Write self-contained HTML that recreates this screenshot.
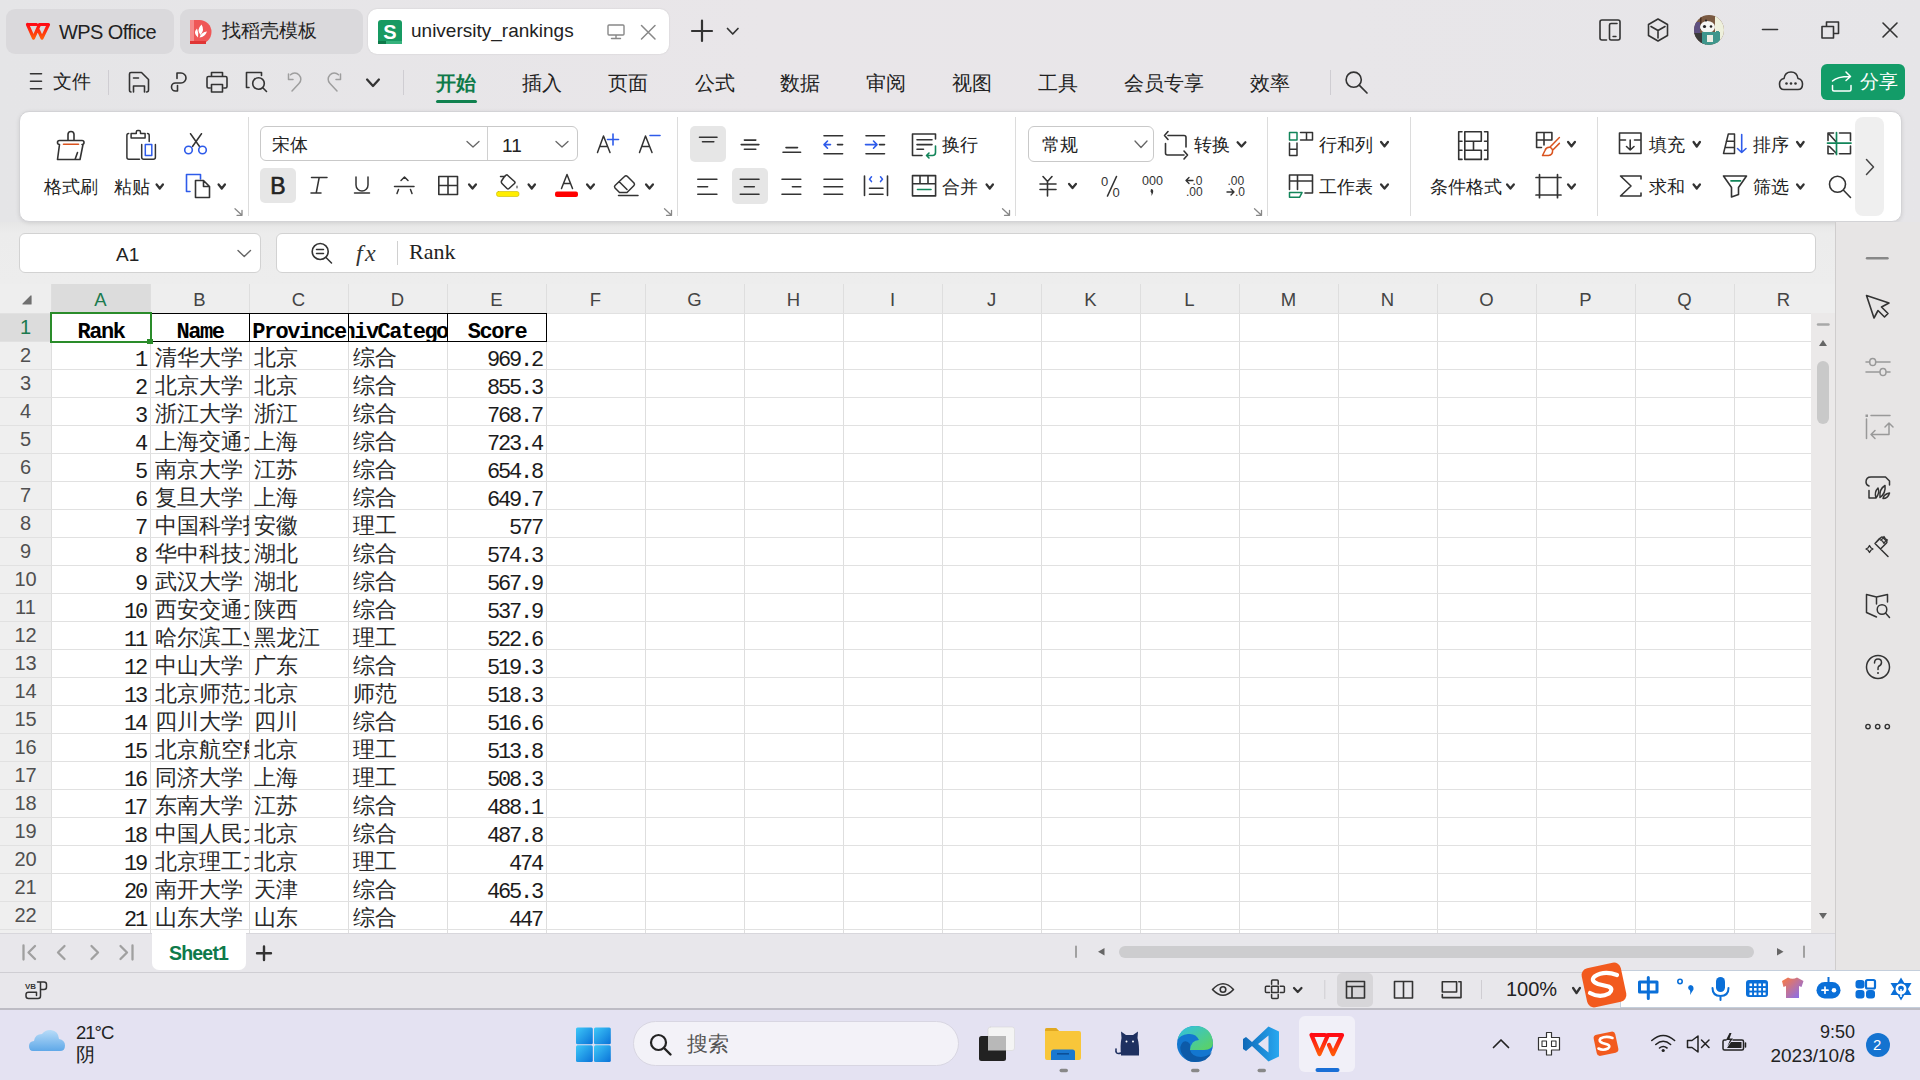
<!DOCTYPE html><html><head><meta charset="utf-8"><style>
*{margin:0;padding:0;box-sizing:border-box}
html,body{width:1920px;height:1080px;overflow:hidden;background:#e8e6ea;font-family:"Liberation Sans",sans-serif;color:#222}
div{position:absolute}
.t{white-space:nowrap;line-height:1}
.sep{background:#cfcdd2;width:1px}
.cell{overflow:hidden;white-space:nowrap;font-family:"Liberation Mono",monospace;font-size:22px;letter-spacing:-2.2px;line-height:38px;color:#1c1c1c}
</style></head><body><div style="left:0px;top:0px;width:1920px;height:222px;background:linear-gradient(90deg,#e5e5e7,#e9e6e9 40%,#e8e6e9 70%,#e6e5e8)"></div>
<div style="left:6px;top:9px;width:168px;height:45px;background:#dad9dc;border-radius:9px"></div>
<div style="left:180px;top:9px;width:183px;height:45px;background:#dad9dc;border-radius:9px"></div>
<div style="left:368px;top:9px;width:301px;height:45px;background:#fff;border-radius:9px;box-shadow:0 0 2px rgba(0,0,0,.12)"></div>
<div class="t" style="left:59px;top:22px;font-size:20px;color:#222;letter-spacing:-0.6px">WPS Office</div>
<div class="t" style="left:222px;top:22px;font-size:18.5px;color:#222">找稻壳模板</div>
<div class="t" style="left:411px;top:21px;font-size:19px;color:#222">university_rankings</div>
<div class="t" style="left:53px;top:72px;font-size:19px">文件</div>
<div class="t" style="left:436px;top:73px;font-size:20px;color:#0f7a4a;font-weight:bold">开始</div>
<div class="t" style="left:522px;top:73px;font-size:20px;color:#222">插入</div>
<div class="t" style="left:608px;top:73px;font-size:20px;color:#222">页面</div>
<div class="t" style="left:695px;top:73px;font-size:20px;color:#222">公式</div>
<div class="t" style="left:780px;top:73px;font-size:20px;color:#222">数据</div>
<div class="t" style="left:866px;top:73px;font-size:20px;color:#222">审阅</div>
<div class="t" style="left:952px;top:73px;font-size:20px;color:#222">视图</div>
<div class="t" style="left:1038px;top:73px;font-size:20px;color:#222">工具</div>
<div class="t" style="left:1124px;top:73px;font-size:20px;color:#222">会员专享</div>
<div class="t" style="left:1250px;top:73px;font-size:20px;color:#222">效率</div>
<div style="left:436px;top:100px;width:41px;height:3px;background:#10814f;border-radius:2px"></div>
<div class="sep" style="left:108px;top:70px;width:1px;height:25px;"></div>
<div class="sep" style="left:403px;top:70px;width:1px;height:25px;"></div>
<div class="sep" style="left:1330px;top:70px;width:1px;height:25px;"></div>
<div style="left:1821px;top:64px;width:84px;height:36px;background:#139c68;border-radius:6px"></div>
<div class="t" style="left:1860px;top:73px;font-size:18.5px;color:#fff">分享</div>
<div style="left:0px;top:222px;width:1835px;height:62px;background:linear-gradient(#e6e6e6,#ececec 12px,#ededed)"></div>
<div style="left:18.5px;top:110.5px;width:1883px;height:111px;background:#fff;border-radius:10px;border:1px solid #d3d3d6;box-shadow:0 1px 4px rgba(0,0,0,.10)"></div>
<div class="t" style="left:44px;top:178px;font-size:18px">格式刷</div>
<div class="t" style="left:114px;top:178px;font-size:18px">粘贴</div>
<div style="left:260px;top:126px;width:318px;height:35px;background:#fff;border:1px solid #c9c9c9;border-radius:6px"></div>
<div style="left:487px;top:127px;width:1px;height:33px;background:#d0d0d0"></div>
<div class="t" style="left:272px;top:136px;font-size:18px">宋体</div>
<div class="t" style="left:502px;top:136px;font-size:19px">11</div>
<div style="left:260px;top:168px;width:36px;height:35px;background:#e6e6e6;border-radius:5px"></div>
<div style="left:690px;top:126px;width:36px;height:36px;background:#e6e6e6;border-radius:5px"></div>
<div style="left:732px;top:168px;width:36px;height:36px;background:#e6e6e6;border-radius:5px"></div>
<div class="t" style="left:942px;top:136px;font-size:18px">换行</div>
<div class="t" style="left:942px;top:178px;font-size:18px">合并</div>
<div style="left:1028px;top:126px;width:126px;height:36px;background:#fff;border:1px solid #c9c9c9;border-radius:6px"></div>
<div class="t" style="left:1042px;top:136px;font-size:18px">常规</div>
<div class="t" style="left:1194px;top:136px;font-size:18px">转换</div>
<div class="t" style="left:1319px;top:136px;font-size:18px">行和列</div>
<div class="t" style="left:1319px;top:178px;font-size:18px">工作表</div>
<div class="t" style="left:1430px;top:178px;font-size:18px">条件格式</div>
<div class="t" style="left:1649px;top:136px;font-size:18px">填充</div>
<div class="t" style="left:1649px;top:178px;font-size:18px">求和</div>
<div class="t" style="left:1753px;top:136px;font-size:18px">排序</div>
<div class="t" style="left:1753px;top:178px;font-size:18px">筛选</div>
<div style="left:1855px;top:117px;width:29px;height:99px;background:#efefef;border-radius:8px"></div>
<div style="left:248px;top:117px;width:1px;height:99px;background:#dcdcdc"></div>
<div style="left:677px;top:117px;width:1px;height:99px;background:#dcdcdc"></div>
<div style="left:1015px;top:117px;width:1px;height:99px;background:#dcdcdc"></div>
<div style="left:1267px;top:117px;width:1px;height:99px;background:#dcdcdc"></div>
<div style="left:1410px;top:117px;width:1px;height:99px;background:#dcdcdc"></div>
<div style="left:1597px;top:117px;width:1px;height:99px;background:#dcdcdc"></div>
<div style="left:19px;top:233px;width:242px;height:40px;background:#fff;border-radius:6px;border:1px solid #d2d2d2"></div>
<div class="t" style="left:116px;top:245px;font-size:19px;color:#222">A1</div>
<div style="left:276px;top:233px;width:1540px;height:40px;background:#fff;border-radius:6px;border:1px solid #d2d2d2"></div>
<div class="t" style="left:409px;top:241px;font-family:Liberation Serif;font-size:22px;color:#222">Rank</div>
<div style="left:397px;top:241px;width:1px;height:24px;background:#d0d0d0"></div>
<div style="left:0px;top:284px;width:1835px;height:29px;background:#eeeeee"></div>
<div style="left:0px;top:313px;width:51px;height:620px;background:#efefef"></div>
<div style="left:51px;top:313px;width:1760px;height:620px;background:#fff"></div>
<div style="left:52px;top:284px;width:98px;height:29px;background:#dcdcdc"></div>
<div style="left:0px;top:314px;width:51px;height:27px;background:#dcdcdc"></div>
<div class="t" style="left:51px;top:290.5px;width:99px;text-align:center;font-size:18.5px;color:#1b7a4e">A</div>
<div class="t" style="left:150px;top:290.5px;width:99px;text-align:center;font-size:18.5px;color:#444">B</div>
<div class="t" style="left:249px;top:290.5px;width:99px;text-align:center;font-size:18.5px;color:#444">C</div>
<div class="t" style="left:348px;top:290.5px;width:99px;text-align:center;font-size:18.5px;color:#444">D</div>
<div class="t" style="left:447px;top:290.5px;width:99px;text-align:center;font-size:18.5px;color:#444">E</div>
<div class="t" style="left:546px;top:290.5px;width:99px;text-align:center;font-size:18.5px;color:#444">F</div>
<div class="t" style="left:645px;top:290.5px;width:99px;text-align:center;font-size:18.5px;color:#444">G</div>
<div class="t" style="left:744px;top:290.5px;width:99px;text-align:center;font-size:18.5px;color:#444">H</div>
<div class="t" style="left:843px;top:290.5px;width:99px;text-align:center;font-size:18.5px;color:#444">I</div>
<div class="t" style="left:942px;top:290.5px;width:99px;text-align:center;font-size:18.5px;color:#444">J</div>
<div class="t" style="left:1041px;top:290.5px;width:99px;text-align:center;font-size:18.5px;color:#444">K</div>
<div class="t" style="left:1140px;top:290.5px;width:99px;text-align:center;font-size:18.5px;color:#444">L</div>
<div class="t" style="left:1239px;top:290.5px;width:99px;text-align:center;font-size:18.5px;color:#444">M</div>
<div class="t" style="left:1338px;top:290.5px;width:99px;text-align:center;font-size:18.5px;color:#444">N</div>
<div class="t" style="left:1437px;top:290.5px;width:99px;text-align:center;font-size:18.5px;color:#444">O</div>
<div class="t" style="left:1536px;top:290.5px;width:99px;text-align:center;font-size:18.5px;color:#444">P</div>
<div class="t" style="left:1635px;top:290.5px;width:99px;text-align:center;font-size:18.5px;color:#444">Q</div>
<div class="t" style="left:1734px;top:290.5px;width:99px;text-align:center;font-size:18.5px;color:#444">R</div>
<div style="left:51px;top:284px;width:1px;height:649px;background:#dedede"></div>
<div style="left:150px;top:284px;width:1px;height:649px;background:#dedede"></div>
<div style="left:249px;top:284px;width:1px;height:649px;background:#dedede"></div>
<div style="left:348px;top:284px;width:1px;height:649px;background:#dedede"></div>
<div style="left:447px;top:284px;width:1px;height:649px;background:#dedede"></div>
<div style="left:546px;top:284px;width:1px;height:649px;background:#dedede"></div>
<div style="left:645px;top:284px;width:1px;height:649px;background:#dedede"></div>
<div style="left:744px;top:284px;width:1px;height:649px;background:#dedede"></div>
<div style="left:843px;top:284px;width:1px;height:649px;background:#dedede"></div>
<div style="left:942px;top:284px;width:1px;height:649px;background:#dedede"></div>
<div style="left:1041px;top:284px;width:1px;height:649px;background:#dedede"></div>
<div style="left:1140px;top:284px;width:1px;height:649px;background:#dedede"></div>
<div style="left:1239px;top:284px;width:1px;height:649px;background:#dedede"></div>
<div style="left:1338px;top:284px;width:1px;height:649px;background:#dedede"></div>
<div style="left:1437px;top:284px;width:1px;height:649px;background:#dedede"></div>
<div style="left:1536px;top:284px;width:1px;height:649px;background:#dedede"></div>
<div style="left:1635px;top:284px;width:1px;height:649px;background:#dedede"></div>
<div style="left:1734px;top:284px;width:1px;height:649px;background:#dedede"></div>
<div style="left:0px;top:313px;width:1811px;height:1px;background:#e1e1e1"></div>
<div style="left:0px;top:341px;width:1811px;height:1px;background:#e1e1e1"></div>
<div style="left:0px;top:369px;width:1811px;height:1px;background:#e1e1e1"></div>
<div style="left:0px;top:397px;width:1811px;height:1px;background:#e1e1e1"></div>
<div style="left:0px;top:425px;width:1811px;height:1px;background:#e1e1e1"></div>
<div style="left:0px;top:453px;width:1811px;height:1px;background:#e1e1e1"></div>
<div style="left:0px;top:481px;width:1811px;height:1px;background:#e1e1e1"></div>
<div style="left:0px;top:509px;width:1811px;height:1px;background:#e1e1e1"></div>
<div style="left:0px;top:537px;width:1811px;height:1px;background:#e1e1e1"></div>
<div style="left:0px;top:565px;width:1811px;height:1px;background:#e1e1e1"></div>
<div style="left:0px;top:593px;width:1811px;height:1px;background:#e1e1e1"></div>
<div style="left:0px;top:621px;width:1811px;height:1px;background:#e1e1e1"></div>
<div style="left:0px;top:649px;width:1811px;height:1px;background:#e1e1e1"></div>
<div style="left:0px;top:677px;width:1811px;height:1px;background:#e1e1e1"></div>
<div style="left:0px;top:705px;width:1811px;height:1px;background:#e1e1e1"></div>
<div style="left:0px;top:733px;width:1811px;height:1px;background:#e1e1e1"></div>
<div style="left:0px;top:761px;width:1811px;height:1px;background:#e1e1e1"></div>
<div style="left:0px;top:789px;width:1811px;height:1px;background:#e1e1e1"></div>
<div style="left:0px;top:817px;width:1811px;height:1px;background:#e1e1e1"></div>
<div style="left:0px;top:845px;width:1811px;height:1px;background:#e1e1e1"></div>
<div style="left:0px;top:873px;width:1811px;height:1px;background:#e1e1e1"></div>
<div style="left:0px;top:901px;width:1811px;height:1px;background:#e1e1e1"></div>
<div style="left:0px;top:929px;width:1811px;height:1px;background:#e1e1e1"></div>
<div class="t" style="left:0px;top:317px;width:51px;text-align:center;font-size:20px;color:#1b7a4e">1</div>
<div class="t" style="left:0px;top:345px;width:51px;text-align:center;font-size:20px;color:#505050">2</div>
<div class="t" style="left:0px;top:373px;width:51px;text-align:center;font-size:20px;color:#505050">3</div>
<div class="t" style="left:0px;top:401px;width:51px;text-align:center;font-size:20px;color:#505050">4</div>
<div class="t" style="left:0px;top:429px;width:51px;text-align:center;font-size:20px;color:#505050">5</div>
<div class="t" style="left:0px;top:457px;width:51px;text-align:center;font-size:20px;color:#505050">6</div>
<div class="t" style="left:0px;top:485px;width:51px;text-align:center;font-size:20px;color:#505050">7</div>
<div class="t" style="left:0px;top:513px;width:51px;text-align:center;font-size:20px;color:#505050">8</div>
<div class="t" style="left:0px;top:541px;width:51px;text-align:center;font-size:20px;color:#505050">9</div>
<div class="t" style="left:0px;top:569px;width:51px;text-align:center;font-size:20px;color:#505050">10</div>
<div class="t" style="left:0px;top:597px;width:51px;text-align:center;font-size:20px;color:#505050">11</div>
<div class="t" style="left:0px;top:625px;width:51px;text-align:center;font-size:20px;color:#505050">12</div>
<div class="t" style="left:0px;top:653px;width:51px;text-align:center;font-size:20px;color:#505050">13</div>
<div class="t" style="left:0px;top:681px;width:51px;text-align:center;font-size:20px;color:#505050">14</div>
<div class="t" style="left:0px;top:709px;width:51px;text-align:center;font-size:20px;color:#505050">15</div>
<div class="t" style="left:0px;top:737px;width:51px;text-align:center;font-size:20px;color:#505050">16</div>
<div class="t" style="left:0px;top:765px;width:51px;text-align:center;font-size:20px;color:#505050">17</div>
<div class="t" style="left:0px;top:793px;width:51px;text-align:center;font-size:20px;color:#505050">18</div>
<div class="t" style="left:0px;top:821px;width:51px;text-align:center;font-size:20px;color:#505050">19</div>
<div class="t" style="left:0px;top:849px;width:51px;text-align:center;font-size:20px;color:#505050">20</div>
<div class="t" style="left:0px;top:877px;width:51px;text-align:center;font-size:20px;color:#505050">21</div>
<div class="t" style="left:0px;top:905px;width:51px;text-align:center;font-size:20px;color:#505050">22</div>
<div class="cell" style="left:52px;top:314px;width:98px;height:27px;font-weight:bold;letter-spacing:-1.5px;color:#000"><div style="left:50%;top:0;transform:translateX(calc(-50% + 0px))">Rank</div></div>
<div class="cell" style="left:151px;top:314px;width:98px;height:27px;font-weight:bold;letter-spacing:-1.5px;color:#000"><div style="left:50%;top:0;transform:translateX(calc(-50% + 0px))">Name</div></div>
<div class="cell" style="left:250px;top:314px;width:98px;height:27px;font-weight:bold;letter-spacing:-1.5px;color:#000"><div style="left:50%;top:0;transform:translateX(calc(-50% + 0px))">Province</div></div>
<div class="cell" style="left:349px;top:314px;width:98px;height:27px;font-weight:bold;letter-spacing:-1.5px;color:#000"><div style="left:50%;top:0;transform:translateX(calc(-50% + 3px))">UnivCategory</div></div>
<div class="cell" style="left:448px;top:314px;width:98px;height:27px;font-weight:bold;letter-spacing:-1.5px;color:#000"><div style="left:50%;top:0;transform:translateX(calc(-50% + 0px))">Score</div></div>
<div class="cell" style="left:52px;top:342px;width:98px;height:27px;text-align:right;padding:0 4px;">1</div>
<div class="cell" style="left:151px;top:342px;width:98px;height:27px;text-align:left;padding:0 4px;font-family:Liberation Serif;letter-spacing:0;font-size:22px;line-height:32px;color:#2a2a2a">清华大学</div>
<div class="cell" style="left:250px;top:342px;width:98px;height:27px;text-align:left;padding:0 4px;font-family:Liberation Serif;letter-spacing:0;font-size:22px;line-height:32px;color:#2a2a2a">北京</div>
<div class="cell" style="left:349px;top:342px;width:98px;height:27px;text-align:left;padding:0 4px;font-family:Liberation Serif;letter-spacing:0;font-size:22px;line-height:32px;color:#2a2a2a">综合</div>
<div class="cell" style="left:448px;top:342px;width:98px;height:27px;text-align:right;padding:0 4px;">969.2</div>
<div class="cell" style="left:52px;top:370px;width:98px;height:27px;text-align:right;padding:0 4px;">2</div>
<div class="cell" style="left:151px;top:370px;width:98px;height:27px;text-align:left;padding:0 4px;font-family:Liberation Serif;letter-spacing:0;font-size:22px;line-height:32px;color:#2a2a2a">北京大学</div>
<div class="cell" style="left:250px;top:370px;width:98px;height:27px;text-align:left;padding:0 4px;font-family:Liberation Serif;letter-spacing:0;font-size:22px;line-height:32px;color:#2a2a2a">北京</div>
<div class="cell" style="left:349px;top:370px;width:98px;height:27px;text-align:left;padding:0 4px;font-family:Liberation Serif;letter-spacing:0;font-size:22px;line-height:32px;color:#2a2a2a">综合</div>
<div class="cell" style="left:448px;top:370px;width:98px;height:27px;text-align:right;padding:0 4px;">855.3</div>
<div class="cell" style="left:52px;top:398px;width:98px;height:27px;text-align:right;padding:0 4px;">3</div>
<div class="cell" style="left:151px;top:398px;width:98px;height:27px;text-align:left;padding:0 4px;font-family:Liberation Serif;letter-spacing:0;font-size:22px;line-height:32px;color:#2a2a2a">浙江大学</div>
<div class="cell" style="left:250px;top:398px;width:98px;height:27px;text-align:left;padding:0 4px;font-family:Liberation Serif;letter-spacing:0;font-size:22px;line-height:32px;color:#2a2a2a">浙江</div>
<div class="cell" style="left:349px;top:398px;width:98px;height:27px;text-align:left;padding:0 4px;font-family:Liberation Serif;letter-spacing:0;font-size:22px;line-height:32px;color:#2a2a2a">综合</div>
<div class="cell" style="left:448px;top:398px;width:98px;height:27px;text-align:right;padding:0 4px;">768.7</div>
<div class="cell" style="left:52px;top:426px;width:98px;height:27px;text-align:right;padding:0 4px;">4</div>
<div class="cell" style="left:151px;top:426px;width:98px;height:27px;text-align:left;padding:0 4px;font-family:Liberation Serif;letter-spacing:0;font-size:22px;line-height:32px;color:#2a2a2a">上海交通大学</div>
<div class="cell" style="left:250px;top:426px;width:98px;height:27px;text-align:left;padding:0 4px;font-family:Liberation Serif;letter-spacing:0;font-size:22px;line-height:32px;color:#2a2a2a">上海</div>
<div class="cell" style="left:349px;top:426px;width:98px;height:27px;text-align:left;padding:0 4px;font-family:Liberation Serif;letter-spacing:0;font-size:22px;line-height:32px;color:#2a2a2a">综合</div>
<div class="cell" style="left:448px;top:426px;width:98px;height:27px;text-align:right;padding:0 4px;">723.4</div>
<div class="cell" style="left:52px;top:454px;width:98px;height:27px;text-align:right;padding:0 4px;">5</div>
<div class="cell" style="left:151px;top:454px;width:98px;height:27px;text-align:left;padding:0 4px;font-family:Liberation Serif;letter-spacing:0;font-size:22px;line-height:32px;color:#2a2a2a">南京大学</div>
<div class="cell" style="left:250px;top:454px;width:98px;height:27px;text-align:left;padding:0 4px;font-family:Liberation Serif;letter-spacing:0;font-size:22px;line-height:32px;color:#2a2a2a">江苏</div>
<div class="cell" style="left:349px;top:454px;width:98px;height:27px;text-align:left;padding:0 4px;font-family:Liberation Serif;letter-spacing:0;font-size:22px;line-height:32px;color:#2a2a2a">综合</div>
<div class="cell" style="left:448px;top:454px;width:98px;height:27px;text-align:right;padding:0 4px;">654.8</div>
<div class="cell" style="left:52px;top:482px;width:98px;height:27px;text-align:right;padding:0 4px;">6</div>
<div class="cell" style="left:151px;top:482px;width:98px;height:27px;text-align:left;padding:0 4px;font-family:Liberation Serif;letter-spacing:0;font-size:22px;line-height:32px;color:#2a2a2a">复旦大学</div>
<div class="cell" style="left:250px;top:482px;width:98px;height:27px;text-align:left;padding:0 4px;font-family:Liberation Serif;letter-spacing:0;font-size:22px;line-height:32px;color:#2a2a2a">上海</div>
<div class="cell" style="left:349px;top:482px;width:98px;height:27px;text-align:left;padding:0 4px;font-family:Liberation Serif;letter-spacing:0;font-size:22px;line-height:32px;color:#2a2a2a">综合</div>
<div class="cell" style="left:448px;top:482px;width:98px;height:27px;text-align:right;padding:0 4px;">649.7</div>
<div class="cell" style="left:52px;top:510px;width:98px;height:27px;text-align:right;padding:0 4px;">7</div>
<div class="cell" style="left:151px;top:510px;width:98px;height:27px;text-align:left;padding:0 4px;font-family:Liberation Serif;letter-spacing:0;font-size:22px;line-height:32px;color:#2a2a2a">中国科学技术大学</div>
<div class="cell" style="left:250px;top:510px;width:98px;height:27px;text-align:left;padding:0 4px;font-family:Liberation Serif;letter-spacing:0;font-size:22px;line-height:32px;color:#2a2a2a">安徽</div>
<div class="cell" style="left:349px;top:510px;width:98px;height:27px;text-align:left;padding:0 4px;font-family:Liberation Serif;letter-spacing:0;font-size:22px;line-height:32px;color:#2a2a2a">理工</div>
<div class="cell" style="left:448px;top:510px;width:98px;height:27px;text-align:right;padding:0 4px;">577</div>
<div class="cell" style="left:52px;top:538px;width:98px;height:27px;text-align:right;padding:0 4px;">8</div>
<div class="cell" style="left:151px;top:538px;width:98px;height:27px;text-align:left;padding:0 4px;font-family:Liberation Serif;letter-spacing:0;font-size:22px;line-height:32px;color:#2a2a2a">华中科技大学</div>
<div class="cell" style="left:250px;top:538px;width:98px;height:27px;text-align:left;padding:0 4px;font-family:Liberation Serif;letter-spacing:0;font-size:22px;line-height:32px;color:#2a2a2a">湖北</div>
<div class="cell" style="left:349px;top:538px;width:98px;height:27px;text-align:left;padding:0 4px;font-family:Liberation Serif;letter-spacing:0;font-size:22px;line-height:32px;color:#2a2a2a">综合</div>
<div class="cell" style="left:448px;top:538px;width:98px;height:27px;text-align:right;padding:0 4px;">574.3</div>
<div class="cell" style="left:52px;top:566px;width:98px;height:27px;text-align:right;padding:0 4px;">9</div>
<div class="cell" style="left:151px;top:566px;width:98px;height:27px;text-align:left;padding:0 4px;font-family:Liberation Serif;letter-spacing:0;font-size:22px;line-height:32px;color:#2a2a2a">武汉大学</div>
<div class="cell" style="left:250px;top:566px;width:98px;height:27px;text-align:left;padding:0 4px;font-family:Liberation Serif;letter-spacing:0;font-size:22px;line-height:32px;color:#2a2a2a">湖北</div>
<div class="cell" style="left:349px;top:566px;width:98px;height:27px;text-align:left;padding:0 4px;font-family:Liberation Serif;letter-spacing:0;font-size:22px;line-height:32px;color:#2a2a2a">综合</div>
<div class="cell" style="left:448px;top:566px;width:98px;height:27px;text-align:right;padding:0 4px;">567.9</div>
<div class="cell" style="left:52px;top:594px;width:98px;height:27px;text-align:right;padding:0 4px;">10</div>
<div class="cell" style="left:151px;top:594px;width:98px;height:27px;text-align:left;padding:0 4px;font-family:Liberation Serif;letter-spacing:0;font-size:22px;line-height:32px;color:#2a2a2a">西安交通大学</div>
<div class="cell" style="left:250px;top:594px;width:98px;height:27px;text-align:left;padding:0 4px;font-family:Liberation Serif;letter-spacing:0;font-size:22px;line-height:32px;color:#2a2a2a">陕西</div>
<div class="cell" style="left:349px;top:594px;width:98px;height:27px;text-align:left;padding:0 4px;font-family:Liberation Serif;letter-spacing:0;font-size:22px;line-height:32px;color:#2a2a2a">综合</div>
<div class="cell" style="left:448px;top:594px;width:98px;height:27px;text-align:right;padding:0 4px;">537.9</div>
<div class="cell" style="left:52px;top:622px;width:98px;height:27px;text-align:right;padding:0 4px;">11</div>
<div class="cell" style="left:151px;top:622px;width:98px;height:27px;text-align:left;padding:0 4px;font-family:Liberation Serif;letter-spacing:0;font-size:22px;line-height:32px;color:#2a2a2a">哈尔滨工业大学</div>
<div class="cell" style="left:250px;top:622px;width:98px;height:27px;text-align:left;padding:0 4px;font-family:Liberation Serif;letter-spacing:0;font-size:22px;line-height:32px;color:#2a2a2a">黑龙江</div>
<div class="cell" style="left:349px;top:622px;width:98px;height:27px;text-align:left;padding:0 4px;font-family:Liberation Serif;letter-spacing:0;font-size:22px;line-height:32px;color:#2a2a2a">理工</div>
<div class="cell" style="left:448px;top:622px;width:98px;height:27px;text-align:right;padding:0 4px;">522.6</div>
<div class="cell" style="left:52px;top:650px;width:98px;height:27px;text-align:right;padding:0 4px;">12</div>
<div class="cell" style="left:151px;top:650px;width:98px;height:27px;text-align:left;padding:0 4px;font-family:Liberation Serif;letter-spacing:0;font-size:22px;line-height:32px;color:#2a2a2a">中山大学</div>
<div class="cell" style="left:250px;top:650px;width:98px;height:27px;text-align:left;padding:0 4px;font-family:Liberation Serif;letter-spacing:0;font-size:22px;line-height:32px;color:#2a2a2a">广东</div>
<div class="cell" style="left:349px;top:650px;width:98px;height:27px;text-align:left;padding:0 4px;font-family:Liberation Serif;letter-spacing:0;font-size:22px;line-height:32px;color:#2a2a2a">综合</div>
<div class="cell" style="left:448px;top:650px;width:98px;height:27px;text-align:right;padding:0 4px;">519.3</div>
<div class="cell" style="left:52px;top:678px;width:98px;height:27px;text-align:right;padding:0 4px;">13</div>
<div class="cell" style="left:151px;top:678px;width:98px;height:27px;text-align:left;padding:0 4px;font-family:Liberation Serif;letter-spacing:0;font-size:22px;line-height:32px;color:#2a2a2a">北京师范大学</div>
<div class="cell" style="left:250px;top:678px;width:98px;height:27px;text-align:left;padding:0 4px;font-family:Liberation Serif;letter-spacing:0;font-size:22px;line-height:32px;color:#2a2a2a">北京</div>
<div class="cell" style="left:349px;top:678px;width:98px;height:27px;text-align:left;padding:0 4px;font-family:Liberation Serif;letter-spacing:0;font-size:22px;line-height:32px;color:#2a2a2a">师范</div>
<div class="cell" style="left:448px;top:678px;width:98px;height:27px;text-align:right;padding:0 4px;">518.3</div>
<div class="cell" style="left:52px;top:706px;width:98px;height:27px;text-align:right;padding:0 4px;">14</div>
<div class="cell" style="left:151px;top:706px;width:98px;height:27px;text-align:left;padding:0 4px;font-family:Liberation Serif;letter-spacing:0;font-size:22px;line-height:32px;color:#2a2a2a">四川大学</div>
<div class="cell" style="left:250px;top:706px;width:98px;height:27px;text-align:left;padding:0 4px;font-family:Liberation Serif;letter-spacing:0;font-size:22px;line-height:32px;color:#2a2a2a">四川</div>
<div class="cell" style="left:349px;top:706px;width:98px;height:27px;text-align:left;padding:0 4px;font-family:Liberation Serif;letter-spacing:0;font-size:22px;line-height:32px;color:#2a2a2a">综合</div>
<div class="cell" style="left:448px;top:706px;width:98px;height:27px;text-align:right;padding:0 4px;">516.6</div>
<div class="cell" style="left:52px;top:734px;width:98px;height:27px;text-align:right;padding:0 4px;">15</div>
<div class="cell" style="left:151px;top:734px;width:98px;height:27px;text-align:left;padding:0 4px;font-family:Liberation Serif;letter-spacing:0;font-size:22px;line-height:32px;color:#2a2a2a">北京航空航天大学</div>
<div class="cell" style="left:250px;top:734px;width:98px;height:27px;text-align:left;padding:0 4px;font-family:Liberation Serif;letter-spacing:0;font-size:22px;line-height:32px;color:#2a2a2a">北京</div>
<div class="cell" style="left:349px;top:734px;width:98px;height:27px;text-align:left;padding:0 4px;font-family:Liberation Serif;letter-spacing:0;font-size:22px;line-height:32px;color:#2a2a2a">理工</div>
<div class="cell" style="left:448px;top:734px;width:98px;height:27px;text-align:right;padding:0 4px;">513.8</div>
<div class="cell" style="left:52px;top:762px;width:98px;height:27px;text-align:right;padding:0 4px;">16</div>
<div class="cell" style="left:151px;top:762px;width:98px;height:27px;text-align:left;padding:0 4px;font-family:Liberation Serif;letter-spacing:0;font-size:22px;line-height:32px;color:#2a2a2a">同济大学</div>
<div class="cell" style="left:250px;top:762px;width:98px;height:27px;text-align:left;padding:0 4px;font-family:Liberation Serif;letter-spacing:0;font-size:22px;line-height:32px;color:#2a2a2a">上海</div>
<div class="cell" style="left:349px;top:762px;width:98px;height:27px;text-align:left;padding:0 4px;font-family:Liberation Serif;letter-spacing:0;font-size:22px;line-height:32px;color:#2a2a2a">理工</div>
<div class="cell" style="left:448px;top:762px;width:98px;height:27px;text-align:right;padding:0 4px;">508.3</div>
<div class="cell" style="left:52px;top:790px;width:98px;height:27px;text-align:right;padding:0 4px;">17</div>
<div class="cell" style="left:151px;top:790px;width:98px;height:27px;text-align:left;padding:0 4px;font-family:Liberation Serif;letter-spacing:0;font-size:22px;line-height:32px;color:#2a2a2a">东南大学</div>
<div class="cell" style="left:250px;top:790px;width:98px;height:27px;text-align:left;padding:0 4px;font-family:Liberation Serif;letter-spacing:0;font-size:22px;line-height:32px;color:#2a2a2a">江苏</div>
<div class="cell" style="left:349px;top:790px;width:98px;height:27px;text-align:left;padding:0 4px;font-family:Liberation Serif;letter-spacing:0;font-size:22px;line-height:32px;color:#2a2a2a">综合</div>
<div class="cell" style="left:448px;top:790px;width:98px;height:27px;text-align:right;padding:0 4px;">488.1</div>
<div class="cell" style="left:52px;top:818px;width:98px;height:27px;text-align:right;padding:0 4px;">18</div>
<div class="cell" style="left:151px;top:818px;width:98px;height:27px;text-align:left;padding:0 4px;font-family:Liberation Serif;letter-spacing:0;font-size:22px;line-height:32px;color:#2a2a2a">中国人民大学</div>
<div class="cell" style="left:250px;top:818px;width:98px;height:27px;text-align:left;padding:0 4px;font-family:Liberation Serif;letter-spacing:0;font-size:22px;line-height:32px;color:#2a2a2a">北京</div>
<div class="cell" style="left:349px;top:818px;width:98px;height:27px;text-align:left;padding:0 4px;font-family:Liberation Serif;letter-spacing:0;font-size:22px;line-height:32px;color:#2a2a2a">综合</div>
<div class="cell" style="left:448px;top:818px;width:98px;height:27px;text-align:right;padding:0 4px;">487.8</div>
<div class="cell" style="left:52px;top:846px;width:98px;height:27px;text-align:right;padding:0 4px;">19</div>
<div class="cell" style="left:151px;top:846px;width:98px;height:27px;text-align:left;padding:0 4px;font-family:Liberation Serif;letter-spacing:0;font-size:22px;line-height:32px;color:#2a2a2a">北京理工大学</div>
<div class="cell" style="left:250px;top:846px;width:98px;height:27px;text-align:left;padding:0 4px;font-family:Liberation Serif;letter-spacing:0;font-size:22px;line-height:32px;color:#2a2a2a">北京</div>
<div class="cell" style="left:349px;top:846px;width:98px;height:27px;text-align:left;padding:0 4px;font-family:Liberation Serif;letter-spacing:0;font-size:22px;line-height:32px;color:#2a2a2a">理工</div>
<div class="cell" style="left:448px;top:846px;width:98px;height:27px;text-align:right;padding:0 4px;">474</div>
<div class="cell" style="left:52px;top:874px;width:98px;height:27px;text-align:right;padding:0 4px;">20</div>
<div class="cell" style="left:151px;top:874px;width:98px;height:27px;text-align:left;padding:0 4px;font-family:Liberation Serif;letter-spacing:0;font-size:22px;line-height:32px;color:#2a2a2a">南开大学</div>
<div class="cell" style="left:250px;top:874px;width:98px;height:27px;text-align:left;padding:0 4px;font-family:Liberation Serif;letter-spacing:0;font-size:22px;line-height:32px;color:#2a2a2a">天津</div>
<div class="cell" style="left:349px;top:874px;width:98px;height:27px;text-align:left;padding:0 4px;font-family:Liberation Serif;letter-spacing:0;font-size:22px;line-height:32px;color:#2a2a2a">综合</div>
<div class="cell" style="left:448px;top:874px;width:98px;height:27px;text-align:right;padding:0 4px;">465.3</div>
<div class="cell" style="left:52px;top:902px;width:98px;height:27px;text-align:right;padding:0 4px;">21</div>
<div class="cell" style="left:151px;top:902px;width:98px;height:27px;text-align:left;padding:0 4px;font-family:Liberation Serif;letter-spacing:0;font-size:22px;line-height:32px;color:#2a2a2a">山东大学</div>
<div class="cell" style="left:250px;top:902px;width:98px;height:27px;text-align:left;padding:0 4px;font-family:Liberation Serif;letter-spacing:0;font-size:22px;line-height:32px;color:#2a2a2a">山东</div>
<div class="cell" style="left:349px;top:902px;width:98px;height:27px;text-align:left;padding:0 4px;font-family:Liberation Serif;letter-spacing:0;font-size:22px;line-height:32px;color:#2a2a2a">综合</div>
<div class="cell" style="left:448px;top:902px;width:98px;height:27px;text-align:right;padding:0 4px;">447</div>
<div style="left:150px;top:313px;width:397px;height:1px;background:#000"></div>
<div style="left:51px;top:341px;width:496px;height:1px;background:#000"></div>
<div style="left:249px;top:313px;width:1px;height:29px;background:#000"></div>
<div style="left:348px;top:313px;width:1px;height:29px;background:#000"></div>
<div style="left:447px;top:313px;width:1px;height:29px;background:#000"></div>
<div style="left:546px;top:313px;width:1px;height:29px;background:#000"></div>
<div style="left:50px;top:312px;width:102px;height:31px;border:2.5px solid #2a8c2a"></div>
<div style="left:147px;top:339px;width:6px;height:5px;background:#2a8c2a"></div>
<div style="left:1811px;top:313px;width:24px;height:620px;background:#ebe9e9"></div>
<div style="left:1817px;top:361px;width:12px;height:63px;background:#c9c9c9;border-radius:6px"></div>
<div style="left:1835px;top:222px;width:85px;height:748px;background:#e7e5e5;border-left:1px solid #cfcdcd"></div>
<div style="left:0px;top:933px;width:1835px;height:39px;background:#e8e7eb"></div>
<div style="left:0px;top:933px;width:152px;height:1px;background:#d8d7dc"></div>
<div style="left:246px;top:933px;width:1589px;height:1px;background:#d8d7dc"></div>
<div style="left:152px;top:933px;width:94px;height:37px;background:#fff;border-radius:0 0 7px 7px"></div>
<div class="t" style="left:169px;top:944px;font-size:19.5px;font-weight:bold;color:#0e7a4a;letter-spacing:-0.8px">Sheet1</div>
<div style="left:1119px;top:946px;width:635px;height:12px;background:#cdcdcf;border-radius:6px"></div>
<div style="left:0px;top:972px;width:1920px;height:36px;background:#e8e7eb;border-top:1px solid #cfced3"></div>
<div style="left:1337px;top:973px;width:36px;height:34px;background:#d7d6d9;border-radius:5px"></div>
<div class="t" style="left:1506px;top:979px;font-size:20px;color:#222">100%</div>
<div style="left:1620px;top:970px;width:1299px;height:38px;background:#fff;border:1px solid #c5cfdc"></div>
<div style="left:0px;top:1008px;width:1920px;height:72px;background:#e4e2f2"></div>
<div style="left:0px;top:1008px;width:1920px;height:1.5px;background:#bdbcc4"></div>
<div style="left:633px;top:1021px;width:326px;height:45px;background:#f3f2f8;border-radius:23px;border:1px solid #d8d6e2"></div>
<div class="t" style="left:687px;top:1033px;font-size:21px;color:#555">搜索</div>
<div style="left:1299px;top:1016px;width:56px;height:56px;background:#f1f0f8;border-radius:6px"></div>
<div class="t" style="left:76px;top:1023.5px;font-size:18.5px;color:#222;letter-spacing:-1px">21°C</div>
<div class="t" style="left:76px;top:1045px;font-size:19px;color:#222">阴</div>
<div class="t" style="left:1755px;top:1023px;width:100px;text-align:right;font-size:18px;color:#222">9:50</div>
<div class="t" style="left:1705px;top:1046px;width:150px;text-align:right;font-size:19px;color:#222">2023/10/8</div>
<div style="left:1866px;top:1033px;width:24px;height:24px;background:#1473d0;border-radius:50%"></div>
<div class="t" style="left:1873px;top:1037px;font-size:15px;color:#fff">2</div>
<svg style="position:absolute;left:0;top:0;pointer-events:none" width="1920" height="1080" viewBox="0 0 1920 1080" stroke-linecap="round" stroke-linejoin="round"><defs><linearGradient id="wpsg" x1="0" y1="0" x2="0" y2="1"><stop offset="0" stop-color="#ff0a14"/><stop offset="1" stop-color="#ff5a0a"/></linearGradient><linearGradient id="shirt" x1="0" y1="0" x2="1" y2="1"><stop offset="0" stop-color="#ff7a3c"/><stop offset="1" stop-color="#7b6cff"/></linearGradient><linearGradient id="edge1" x1="0" y1="0" x2="1" y2="1"><stop offset="0" stop-color="#2fc0e8"/><stop offset="1" stop-color="#5fd35a"/></linearGradient></defs><path d="M27.5 24.5 H36.5 M27.5 24.5 L33.5 38 L39.5 24.5 H48.5 L42 38 L38.5 30.5" stroke="url(#wpsg)" stroke-width="3.2" fill="none" /><path d="M190 20 H199.5 A12 12 0 0 1 199.5 44 H190 Z" stroke="none" stroke-width="0" fill="#ef5757" /><rect x="190" y="20" width="4" height="24" fill="#f58b8b"/><rect x="190" y="41" width="16" height="3" fill="#e03535"/><path d="M201.5 24.5 Q196 30 200.5 35 Q205 30 201.5 24.5 Z M197 28.5 Q192.5 33 198 37.5 Q199 33 197 28.5 Z M207 31.5 Q201.5 32 199.5 37.5 Q205 37 207 31.5 Z" stroke="none" stroke-width="0" fill="#fff" /><rect x="378" y="20" width="24" height="24" rx="3" fill="#179a62"/><rect x="378" y="41" width="24" height="3" fill="#35b27c"/><rect x="378" y="41" width="8" height="3" fill="#0e7a4a"/><text x="390" y="39" font-family="Liberation Sans" font-weight="bold" font-size="20" fill="#fff" text-anchor="middle">S</text><path d="M609 25 H623 Q624 25 624 26 V34 Q624 35 623 35 H609 Q608 35 608 34 V26 Q608 25 609 25 Z M616 35 V38.5 M611.5 38.5 H620.5" stroke="#888" stroke-width="1.4" fill="none" /><path d="M641.5 25.5 L655 39 M655 25.5 L641.5 39" stroke="#888" stroke-width="1.5" fill="none" /><path d="M702 20.5 V41 M692 31 H712" stroke="#333" stroke-width="2.2" fill="none" /><path d="M727.5 28.5 L732.75 34 L738 28.5" stroke="#333" stroke-width="1.7" fill="none" /><path d="M1606.5 40 H1602 Q1600 40 1600 38 V22 Q1600 20 1602 20 H1618 Q1620 20 1620 22 V38 Q1620 40 1618 40 H1611 Q1609.5 40 1609.5 38.5 V25 Q1609.5 23.5 1611 23.5 H1617" stroke="#333" stroke-width="1.6" fill="none" /><path d="M1613 36.5 H1616" stroke="#333" stroke-width="1.4" fill="none" /><path d="M1658 19 L1667.5 24.5 V35.5 L1658 41 L1648.5 35.5 V24.5 Z M1651 26.5 L1658 30.5 L1665 26.5 M1658 30.5 V38" stroke="#333" stroke-width="1.6" fill="none" /><clipPath id="av"><circle cx="1709" cy="30" r="15"/></clipPath><g clip-path="url(#av)"><rect x="1694" y="15" width="30" height="30" fill="#7a5a42"/><rect x="1715" y="15" width="10" height="30" fill="#eef0dc"/><rect x="1694" y="22" width="6" height="12" fill="#5e5080"/><rect x="1700" y="16" width="1.5" height="14" fill="#4a3020"/><ellipse cx="1707.5" cy="27" rx="7.5" ry="6" fill="#f6f6f2"/><circle cx="1704.5" cy="26.5" r="1.6" fill="#222"/><circle cx="1711" cy="26.5" r="1.3" fill="#222"/><circle cx="1706" cy="20.5" r="1" fill="#222"/><rect x="1694" y="33" width="12" height="12" fill="#3a3a3a"/><rect x="1702" y="32" width="18" height="13" fill="#3f968c"/><rect x="1707" y="35" width="6" height="7" fill="#eeeee4"/><rect x="1716" y="31" width="3" height="12" fill="#3f968c"/></g><path d="M1762.5 29.5 H1777.5" stroke="#333" stroke-width="1.6" fill="none" /><path d="M1826.5 26 V22 H1838.5 V33.5 H1834 M1822 26.5 H1833.5 V38 H1822 Z" stroke="#333" stroke-width="1.6" fill="none" /><path d="M1883 23 L1897 37 M1897 23 L1883 37" stroke="#333" stroke-width="1.6" fill="none" /><path d="M30.5 73.7 H41.5 M30.5 81.2 H41.5 M30.5 88.7 H41.5" stroke="#333" stroke-width="1.6" fill="none" /><path d="M131 92 Q129.5 92 129.5 90 V74 Q129.5 72.5 131 72.5 H141.5 L148.5 79.5 V90 Q148.5 92 146.5 92 M133.5 92 V86 H144.5 V92 M133.5 78 H138.5" stroke="#333" stroke-width="1.6" fill="none" /><path d="M177 78.5 V73 H181 A5 5 0 0 1 181 83 H175.5 A4 4 0 0 0 175.5 91 H177.5 V85.5" stroke="#333" stroke-width="1.6" fill="none" /><path d="M211.5 76.5 V72.5 H222.5 V76.5 M210 88 H208.5 Q207 88 207 86.5 V78 Q207 76.5 208.5 76.5 H225.5 Q227 76.5 227 78 V86.5 Q227 88 225.5 88 H224 M211.5 84.5 H222.5 V92 H211.5 Z" stroke="#333" stroke-width="1.6" fill="none" /><path d="M249 87.5 H246.5 V72.5 H261.5 V75.5" stroke="#333" stroke-width="1.6" fill="none" /><circle cx="258.5" cy="83.5" r="5.8" stroke="#333" stroke-width="1.6" fill="none"/><path d="M262.8 87.8 L266.5 91.5" stroke="#333" stroke-width="1.6" fill="none" /><path d="M292 91 L299 83.5 A6 6 0 0 0 290.5 74.8 M288.5 74 V79.5 H293" stroke="#9e9e9e" stroke-width="1.5" fill="none" /><path d="M337 91 L330 83.5 A6 6 0 0 1 338.5 74.8 M340.5 74 V79.5 H336" stroke="#9e9e9e" stroke-width="1.5" fill="none" /><path d="M367.1 79.5 L373.0 86 L378.9 79.5" stroke="#333" stroke-width="2.3" fill="none" /><circle cx="1353.7" cy="79.7" r="7.6" stroke="#333" stroke-width="1.6" fill="none"/><path d="M1359.2 85.2 L1367 93" stroke="#333" stroke-width="1.7" fill="none" /><path d="M1784 89.5 Q1779.5 89.5 1779.5 84 Q1779.5 79.5 1784 78.5 Q1785 72 1791 72 Q1797 72 1798 78.5 Q1802.5 79.5 1802.5 84 Q1802.5 89.5 1798 89.5 Z" stroke="#333" stroke-width="1.6" fill="none" /><circle cx="1786.5" cy="83.5" r="1.3" fill="#333"/><circle cx="1791" cy="83.5" r="1.3" fill="#333"/><circle cx="1795.5" cy="83.5" r="1.3" fill="#333"/><path d="M1832.5 81 Q1837 76.5 1850 76.5 M1846 72 L1850.5 76.5 L1846 80.5 M1832.5 85.5 V89.5 Q1832.5 91 1834 91 H1849.5 Q1851 91 1851 89.5 V85.5" stroke="#fff" stroke-width="1.5" fill="none" /><path d="M68 140.5 V134.5 A3 3 0 0 1 74 134.5 V140.5 M59.5 144.5 Q57.5 144.5 57.5 142.5 Q57.5 140.5 59.5 140.5 H82 Q84 140.5 84 142.5 Q84 144.5 82 144.5 M59.5 144.5 L57.5 159.5 H80 L83 144.5 M77.5 152.5 L75 159.5" stroke="#333" stroke-width="1.6" fill="none" /><path d="M63.5 144.3 H78.5" stroke="#d9531e" stroke-width="1.6" fill="none" /><path d="M128.7 133.6 Q126.9 133.6 126.9 135.5 V157.3 Q126.9 159.3 128.9 159.3 H139.5 M147.5 133.6 Q149.2 133.6 149.2 135.5 V141.5 M131.1 133.6 H136.3 V132 Q136.3 130.6 137.7 130.6 H139.1 Q140.5 130.6 140.5 132 V133.6 H145.1 V138.1 H131.1 Z M141.7 144.5 V157.3 Q141.7 159.3 143.7 159.3 H153.4 Q155.4 159.3 155.4 157.3 V144.5" stroke="#333" stroke-width="1.5" fill="none" /><path d="M145.3 144.6 H151.8 V155.6 H145.3 Z" stroke="#2e5bea" stroke-width="1.5" fill="none" /><path d="M190.5 133.7 L199.5 146.5 M201.5 133.7 L192.5 146.5" stroke="#333" stroke-width="1.5" fill="none" /><circle cx="188.5" cy="150" r="3.8" stroke="#2e5bea" stroke-width="1.6" fill="none"/><circle cx="202.5" cy="150" r="3.8" stroke="#2e5bea" stroke-width="1.6" fill="none"/><path d="M190 191.5 H186.5 V174.5 H200.5 V179" stroke="#2e5bea" stroke-width="1.6" fill="none" /><path d="M195.5 197.5 V180.5 H203.5 L209.5 186.5 V197.5 Z M203.5 180.5 V186.5 H209.5" stroke="#333" stroke-width="1.6" fill="none" /><path d="M156.6 184.5 L159.75 188.5 L162.9 184.5" stroke="#333" stroke-width="2.3" fill="none" /><path d="M218.6 184.5 L221.75 188.5 L224.9 184.5" stroke="#333" stroke-width="2.3" fill="none" /><path d="M235 208.8 L242 215.3 M242 210.3 V215.3 H237" stroke="#888" stroke-width="1.3" fill="none" /><path d="M664.5 208.8 L671.5 215.3 M671.5 210.3 V215.3 H666.5" stroke="#888" stroke-width="1.3" fill="none" /><path d="M1002.5 208.8 L1009.5 215.3 M1009.5 210.3 V215.3 H1004.5" stroke="#888" stroke-width="1.3" fill="none" /><path d="M1254.5 208.8 L1261.5 215.3 M1261.5 210.3 V215.3 H1256.5" stroke="#888" stroke-width="1.3" fill="none" /><path d="M467 141.5 L473.0 147 L479 141.5" stroke="#666" stroke-width="1.3" fill="none" /><path d="M556 141.5 L562.0 147 L568 141.5" stroke="#666" stroke-width="1.3" fill="none" /><path d="M597.5 152.5 L603.5 136 L610 152.5 M600 146.5 H607.5" stroke="#333" stroke-width="1.5" fill="none" /><path d="M613 134 V145 M607.5 139.5 H618.5" stroke="#2e5bea" stroke-width="1.6" fill="none" /><path d="M639.5 152.5 L645.5 136 L652 152.5 M642 146.5 H649.5" stroke="#333" stroke-width="1.5" fill="none" /><path d="M650 135.5 H660" stroke="#2e5bea" stroke-width="1.6" fill="none" /><text x="278" y="193.5" font-family="Liberation Sans" font-size="23" stroke="#222" stroke-width="0.6" fill="#222" text-anchor="middle">B</text><path d="M311.5 177.5 H327 M319.2 177.5 L316.2 193 M311 193 H321" stroke="#333" stroke-width="1.5" fill="none" /><path d="M356 177 V185 A6 6 0 0 0 368 185 V177 M354.5 193 H369.5" stroke="#333" stroke-width="1.5" fill="none" /><path d="M401 180.5 L404.5 177 L408 180.5 M398.5 189.5 L397 193.5 M410.5 189.5 L412 193.5 M394.5 186.5 H414" stroke="#333" stroke-width="1.5" fill="none" /><path d="M438.8 176.5 H457.5 V194.5 H438.8 Z M448 176.5 V194.5 M438.8 185.5 H457.5" stroke="#333" stroke-width="1.6" fill="none" /><path d="M469.1 184.5 L472.5 188.5 L475.9 184.5" stroke="#333" stroke-width="2.3" fill="none" /><path d="M500.5 176.5 H505 M507 174.8 L514.5 181.5 Q515.5 182.5 514.5 183.5 L509 188.5 Q508 189.5 507 188.5 L502 183.5 Q501 182.5 501.5 181 L504.5 176.5 Q505.5 175 507 174.8 Z" stroke="#333" stroke-width="1.5" fill="none" /><path d="M517 185 Q518.5 187.5 517 189 Q515.5 187.5 517 185 Z" fill="#333"/><rect x="496.5" y="191.5" width="22.5" height="5" rx="2" fill="#ffee00" stroke="#c8b800" stroke-width=".6"/><path d="M528.6 184.5 L531.75 188.5 L534.9 184.5" stroke="#333" stroke-width="2.3" fill="none" /><path d="M561.5 188.5 L567 174.5 L572.5 188.5 M563.5 183.5 H570.5" stroke="#333" stroke-width="1.5" fill="none" /><rect x="555" y="191.5" width="23" height="5.5" rx="2" fill="#ff0000"/><path d="M587.1 184.5 L590.5 188.5 L593.9 184.5" stroke="#333" stroke-width="2.3" fill="none" /><path d="M624.5 176.5 Q626 175 627.5 176.5 L634 183 Q635 184.5 634 185.5 L627 192.5 H619.5 L615 188 Q614 186.5 615 185.5 Z M619 181.5 L627 189.5 M618.5 195.5 H638" stroke="#333" stroke-width="1.5" fill="none" /><path d="M646.1 184.5 L649.5 188.5 L652.9 184.5" stroke="#333" stroke-width="2.3" fill="none" /><path d="M699.5 137.2 H717 M702.5 141.8 H713.8" stroke="#333" stroke-width="1.6" fill="none" /><path d="M744.4 140.1 H755.8 M741.2 144.6 H758.9 M744.4 149.2 H755.8" stroke="#333" stroke-width="1.6" fill="none" /><path d="M786 147.6 H797.5 M783 152.3 H800.6" stroke="#333" stroke-width="1.6" fill="none" /><path d="M824 135.8 H842.6 M824 153.7 H842.6 M837.5 144.6 H842.6" stroke="#333" stroke-width="1.6" fill="none" /><path d="M824 144.6 H830.5 M827.5 141 L824 144.6 L827.5 148.2" stroke="#2e5bea" stroke-width="1.6" fill="none" /><path d="M866 135.8 H884.5 M866 153.7 H884.5 M879.5 144.6 H884.5" stroke="#333" stroke-width="1.6" fill="none" /><path d="M865.5 144.6 H877 M873.5 141 L877 144.6 L873.5 148.2" stroke="#2e5bea" stroke-width="1.6" fill="none" /><path d="M697.8 179.2 H716.9 M697.8 186.7 H707.6 M697.8 194.3 H716.9" stroke="#333" stroke-width="1.6" fill="none" /><path d="M740.3 179.2 H759 M744.3 186.7 H754.3 M740.3 194.3 H759" stroke="#333" stroke-width="1.6" fill="none" /><path d="M782 179.2 H800.8 M792.4 186.7 H800.8 M782 194.3 H800.8" stroke="#333" stroke-width="1.6" fill="none" /><path d="M824 179.2 H842.6 M824 186.7 H842.6 M824 194.3 H842.6" stroke="#333" stroke-width="1.6" fill="none" /><path d="M864.5 176 V195.5 M887.5 176 V195.5 M869.5 188.2 H883 M869.5 194.3 H883" stroke="#333" stroke-width="1.6" fill="none" /><path d="M871.5 176.8 L869.5 179.2 L871.5 181.6 M880.5 176.8 L882.5 179.2 L880.5 181.6" stroke="#2e5bea" stroke-width="1.5" fill="none" /><path d="M922 155.5 H912.5 V134 H935.5 V139" stroke="#333" stroke-width="1.6" fill="none" /><path d="M917 139.8 H932 M917 144.6 H932 M917 149.2 H923.5" stroke="#333" stroke-width="1.6" fill="none" /><path d="M935.5 146 V152.5 Q935.5 155.5 932.5 155.5 H926.5 M929 153 L926.5 155.5 L929 158" stroke="#12855a" stroke-width="1.6" fill="none" /><path d="M912.5 175.6 H935.6 V195.9 H912.5 Z M912.5 183.8 H935.6 M920 175.6 V183.8 M928 175.6 V183.8" stroke="#333" stroke-width="1.6" fill="none" /><path d="M917.5 189.5 H931" stroke="#12855a" stroke-width="1.6" fill="none" /><path d="M986.6 184.5 L989.75 188.5 L992.9 184.5" stroke="#333" stroke-width="2.3" fill="none" /><path d="M1135 141 L1141.0 147.5 L1147 141" stroke="#666" stroke-width="1.3" fill="none" /><path d="M1168 135.5 H1184 Q1186 135.5 1186 137.5 V147 M1168 131.5 L1164.5 135.5 L1168 139.5 M1184 155 H1167.5 Q1165.5 155 1165.5 153 V143.5 M1184 151 L1187.5 155 L1184 159" stroke="#333" stroke-width="1.6" fill="none" /><path d="M1237.6 142.3 L1241.5 146.5 L1245.4 142.3" stroke="#333" stroke-width="2.3" fill="none" /><path d="M1043 176.5 L1047.5 181.5 L1052 176.5 M1040 184 H1056 M1040 189.5 H1056 M1047.5 181.5 V196" stroke="#333" stroke-width="1.6" fill="none" /><path d="M1069.1 184 L1072.5 188 L1075.9 184" stroke="#333" stroke-width="2.3" fill="none" /><text x="1142" y="184.5" font-family="Liberation Sans" font-size="12.5" fill="#333" textLength="21">000</text><text x="1101" y="185.5" font-family="Liberation Sans" font-size="13" fill="#333">0</text><text x="1112.5" y="196.5" font-family="Liberation Sans" font-size="13" fill="#333">0</text><path d="M1116.5 176.5 L1107.5 196" stroke="#333" stroke-width="1.6" fill="none" /><path d="M1151 189 Q1154 189 1153 193 L1151.5 196 Q1152 192.5 1150.5 191.5 Z" fill="#333"/><text x="1192.5" y="184.5" font-family="Liberation Sans" font-size="12" fill="#333">.0</text><text x="1186" y="196" font-family="Liberation Sans" font-size="12" fill="#333">.00</text><path d="M1186 180.5 H1193 M1189 177.5 L1186 180.5 L1189 183.5" stroke="#333" stroke-width="1.4" fill="none" /><text x="1227.5" y="184.5" font-family="Liberation Sans" font-size="12" fill="#333">.00</text><text x="1235" y="196" font-family="Liberation Sans" font-size="12" fill="#333">.0</text><path d="M1227 192 H1234 M1231 189 L1234 192 L1231 195" stroke="#333" stroke-width="1.4" fill="none" /><path d="M1289.5 132.5 H1297 V140 H1289.5 Z" stroke="#12855a" stroke-width="1.5" fill="none" /><path d="M1289.5 143 V155.5 H1297 V143 M1289.5 149.2 H1297 M1300.5 132.5 H1312.5 V140 H1300.5 M1306.5 132.5 V140" stroke="#333" stroke-width="1.5" fill="none" /><path d="M1381.1 142 L1384.5 146.3 L1387.9 142" stroke="#333" stroke-width="2.3" fill="none" /><path d="M1289.5 189.5 V175 H1312.5 V193 H1305 M1289.5 181 H1312.5 M1297.5 175 V189.5" stroke="#333" stroke-width="1.6" fill="none" /><path d="M1289.5 192.6 H1302 L1299.5 197.3 H1289.5 Z" stroke="#12855a" stroke-width="1.5" fill="none" /><path d="M1381.1 184.5 L1384.5 188.5 L1387.9 184.5" stroke="#333" stroke-width="2.3" fill="none" /><path d="M1462 131.8 H1458.7 V159.4 H1462 M1458.7 141.2 H1462 M1458.7 150.3 H1462 M1484.5 131.8 H1487.8 V159.4 H1484.5 M1487.8 141.2 H1484.5 M1487.8 150.3 H1484.5 M1464.8 131.8 H1481.3 V141.2 H1464.8 Z M1464.8 141.2 V159.4 H1481.3 V150.3 H1464.8 M1473.5 141.2 V150.3" stroke="#333" stroke-width="1.6" fill="none" /><path d="M1507.1 184.5 L1510.45 188.5 L1513.8000000000002 184.5" stroke="#333" stroke-width="2.3" fill="none" /><path d="M1541.5 147.5 H1536.6 V132.5 H1551.9 V140 H1536.6 M1544 132.5 V145" stroke="#333" stroke-width="1.6" fill="none" /><path d="M1559.4 137.5 L1549.8 147.3 M1559.4 143.4 L1552.6 150.2 M1549.8 147.3 Q1546 147 1545 150.5 L1542.5 155.5 H1548.5 Q1552.8 155 1552.6 150.2 Q1552 147.8 1549.8 147.3 Z" stroke="#d9531e" stroke-width="1.5" fill="none" /><path d="M1568.1 142 L1571.5 146.3 L1574.9 142" stroke="#333" stroke-width="2.3" fill="none" /><path d="M1539.5 174.7 V197.7 M1557.5 174.7 V197.7 M1536 177.5 H1561 M1536 195 H1561" stroke="#333" stroke-width="1.7" fill="none" /><path d="M1568.1 184.5 L1571.5 188.5 L1574.9 184.5" stroke="#333" stroke-width="2.3" fill="none" /><path d="M1619.5 133 H1641 V153.5 H1619.5 Z M1619.5 140 H1625.5 M1634.5 140 H1641" stroke="#333" stroke-width="1.6" fill="none" /><path d="M1630.2 140 V150 M1626.5 146.5 L1630.2 150 L1634 146.5" stroke="#333" stroke-width="1.6" fill="none" /><path d="M1693.6 142 L1696.75 146.5 L1699.9 142" stroke="#333" stroke-width="2.3" fill="none" /><path d="M1723.5 153.5 L1728.3 134 H1734.5 V153.5 Z M1726.2 141.2 H1734.5 M1724.9 147.6 H1734.5" stroke="#333" stroke-width="1.5" fill="none" /><path d="M1741.7 134.5 V152.5 M1737.5 148.5 L1741.7 152.5 L1746 148.5" stroke="#2e5bea" stroke-width="1.6" fill="none" /><path d="M1797.1 142 L1800.35 146.5 L1803.6000000000001 142" stroke="#333" stroke-width="2.3" fill="none" /><path d="M1828 140.5 V133 H1833.5 M1839.5 133 H1850.5 V140.5 M1850.5 146 V153.8 H1839.5 M1833.5 153.8 H1828 V146 M1829.5 134.5 L1836 141.8 M1829.5 146.5 L1836 153" stroke="#333" stroke-width="1.6" fill="none" /><path d="M1836.5 132.5 V154.5 M1827.5 143.1 H1851" stroke="#12855a" stroke-width="1.7" fill="none" /><path d="M1641 179 V176 H1620.5 L1631 186 L1620.5 196 H1641 V193" stroke="#333" stroke-width="1.6" fill="none" /><path d="M1693.6 184.5 L1696.75 188.5 L1699.9 184.5" stroke="#333" stroke-width="2.3" fill="none" /><path d="M1723.5 176 H1746.5 L1738.5 187.5 V194.5 L1731.5 197 V187.5 Z" stroke="#333" stroke-width="1.6" fill="none" /><path d="M1731 180.8 H1740.5" stroke="#12855a" stroke-width="1.7" fill="none" /><path d="M1797.1 184.5 L1800.35 188.5 L1803.6000000000001 184.5" stroke="#333" stroke-width="2.3" fill="none" /><circle cx="1837.5" cy="184.3" r="8" stroke="#333" stroke-width="1.6" fill="none"/><path d="M1843.5 190.3 L1850.5 197.5" stroke="#333" stroke-width="1.6" fill="none" /><path d="M1866.5 159.5 L1873.5 167 L1866.5 174.5" stroke="#444" stroke-width="1.5" fill="none" /><path d="M238 250.5 L244.25 256.5 L250.5 250.5" stroke="#666" stroke-width="1.4" fill="none" /><circle cx="320.2" cy="251.5" r="8" stroke="#333" stroke-width="1.6" fill="none"/><path d="M316.5 249.5 H323.5 M316.5 253.5 H323.5 M326 257.5 L331.5 263" stroke="#333" stroke-width="1.5" fill="none" /><text x="356" y="261" font-family="Liberation Serif" font-style="italic" font-size="24" fill="#333">f</text><text x="365" y="261" font-family="Liberation Serif" font-style="italic" font-size="24" fill="#333">x</text><path d="M31 296 V304 H23 Z" fill="#707070" stroke="#707070" stroke-width="1.2" stroke-linejoin="round"/><path d="M1818 324.5 H1828.5" stroke="#a8a8a8" stroke-width="2.4" fill="none" /><path d="M1819 346 L1823 340 L1827 346 Z" fill="#666"/><path d="M1819 913 L1823 919 L1827 913 Z" fill="#666"/><path d="M1867 258.3 H1887.5" stroke="#888" stroke-width="2.4" fill="none" /><path d="M1866.5 295.5 L1889 303 L1881.5 307 L1888 313.5 L1884.5 317 L1878 310.5 L1874 318 Z" stroke="#333" stroke-width="1.6" fill="none" /><path d="M1866 362 H1869.5 M1876 362 H1890 M1866 372 H1879.5 M1886.5 372 H1890" stroke="#999" stroke-width="1.5" fill="none" /><ellipse cx="1872.7" cy="362" rx="3" ry="3.6" stroke="#999" stroke-width="1.5" fill="none"/><ellipse cx="1883" cy="372" rx="3" ry="3.6" stroke="#999" stroke-width="1.5" fill="none"/><path d="M1866.5 419 V438.5 M1871 415.5 H1890 M1889 423.5 V434.5 H1871 M1885 427 L1889 423 L1893 427 M1875 430.5 L1871 434.5 L1875 438.5" stroke="#999" stroke-width="1.5" fill="none" /><rect x="1865.5" y="414.5" width="2.5" height="2.5" fill="#999"/><path d="M1869 490.5 V498 H1875 M1869 486 Q1866 485 1866 482 Q1866 477 1871 477 H1885.5 L1889.5 481 V485 M1876 498 Q1874 492 1878 488 Q1880 493 1876 498 Z M1880 497.5 Q1879 489 1885 485.5 Q1886 493 1880 497.5 Z M1883 498.5 Q1884 494 1889.5 493 Q1888 498.5 1883 498.5 Z" stroke="#333" stroke-width="1.5" fill="none" /><path d="M1875 543.5 L1881 537.5 Q1882 536.5 1883 537.5 L1886.5 541 Q1887.5 542 1886.5 543 L1880.5 549 M1875 543.5 L1888 556.5 M1880.5 549 L1877.5 546 M1875 543.5 L1879.5 538.5" stroke="#333" stroke-width="1.5" fill="none" /><path d="M1884 536.5 L1885.3 538.7 L1887.5 540 L1885.3 541.3 L1884 543.5 L1882.7 541.3 L1880.5 540 L1882.7 538.7 Z M1869.5 545.5 L1870.8 547.7 L1873 549 L1870.8 550.3 L1869.5 552.5 L1868.2 550.3 L1866 549 L1868.2 547.7 Z" stroke="#333" stroke-width="1.3" fill="none" /><path d="M1887 539.5 L1888.5 536.5 L1890 539.5" stroke="none" fill="none"/><path d="M1866.5 594.5 V612.5 L1876.5 617 M1866.5 594.5 L1876.5 597 L1887.5 594.5 V602 M1876.5 597 V604" stroke="#333" stroke-width="1.5" fill="none" /><circle cx="1882" cy="609.5" r="4.8" stroke="#333" stroke-width="1.5" fill="none"/><path d="M1885.5 613 L1889.5 617.5" stroke="#333" stroke-width="1.5" fill="none" /><circle cx="1878" cy="667" r="11.5" stroke="#333" stroke-width="1.5" fill="none"/><path d="M1874.5 663 Q1874.5 659 1878 659 Q1881.5 659 1881.5 662.5 Q1881.5 665 1878.5 666.5 Q1878 667 1878 669.5" stroke="#333" stroke-width="1.5" fill="none" /><circle cx="1878" cy="673" r="1" fill="#333"/><circle cx="1868" cy="726.6" r="2.2" stroke="#333" stroke-width="1.4" fill="none"/><circle cx="1877.7" cy="726.6" r="2.2" stroke="#333" stroke-width="1.4" fill="none"/><circle cx="1887.3" cy="726.6" r="2.2" stroke="#333" stroke-width="1.4" fill="none"/><path d="M23.5 945.5 V959.5 M35 946 L28.5 952.5 L35 959" stroke="#a0a0a0" stroke-width="2.3" fill="none" /><path d="M64.5 946 L58 952.5 L64.5 959" stroke="#a0a0a0" stroke-width="2.3" fill="none" /><path d="M91.5 946 L98 952.5 L91.5 959" stroke="#a0a0a0" stroke-width="2.3" fill="none" /><path d="M120.5 946 L127 952.5 L120.5 959 M132.5 945.5 V959.5" stroke="#a0a0a0" stroke-width="2.3" fill="none" /><path d="M264 946.5 V960 M257 953.2 H271" stroke="#333" stroke-width="2.4" fill="none" /><path d="M1076 946.5 V957" stroke="#999" stroke-width="1.8" fill="none" /><path d="M1104.5 948 L1098 951.8 L1104.5 955.5 Z" fill="#666"/><path d="M1777 948 L1783.5 951.8 L1777 955.5 Z" fill="#666"/><path d="M1804 946.5 V957" stroke="#999" stroke-width="1.8" fill="none" /><path d="M37.5 982 H44 Q46.5 982 46.5 984.5 V987 Q46.5 989.5 44 989.5 H41 M40.5 982.5 V996 Q40.5 998.5 38 998.5 H28.5 Q26 998.5 26 996 V994.5 Q26 992.3 28.5 992.3 H36.5 V995.5" stroke="#333" stroke-width="1.5" fill="none" /><text x="25" y="988.5" font-family="Liberation Sans" font-weight="bold" font-size="8" fill="#333" textLength="11" lengthAdjust="spacingAndGlyphs">VB</text><path d="M1212.5 989.5 Q1223 978 1233.5 989.5 Q1223 1001 1212.5 989.5 Z" stroke="#333" stroke-width="1.6" fill="none" /><circle cx="1223" cy="989.5" r="2.8" stroke="#333" stroke-width="1.6" fill="none"/><path d="M1271.6 986.2 H1278.2 V992.4 H1271.6 Z M1271.6 984.2 V981 Q1271.6 980 1272.6 980 H1277.2 Q1278.2 980 1278.2 981 V984.2 M1271.6 994.4 V997.6 Q1271.6 998.6 1272.6 998.6 H1277.2 Q1278.2 998.6 1278.2 997.6 V994.4 M1269.6 986.2 H1266.4 Q1265.4 986.2 1265.4 987.2 V991.4 Q1265.4 992.4 1266.4 992.4 H1269.6 M1280.2 986.2 H1283.4 Q1284.4 986.2 1284.4 987.2 V991.4 Q1284.4 992.4 1283.4 992.4 H1280.2" stroke="#333" stroke-width="1.5" fill="none" /><path d="M1294 988 L1297.75 992 L1301.5 988" stroke="#333" stroke-width="2.2" fill="none" /><rect x="1324.3" y="980" width="1" height="19" fill="#cfcdd2"/><rect x="1481" y="980" width="1" height="19" fill="#cfcdd2"/><path d="M1346.5 981.5 H1364.5 V998 H1346.5 Z M1346.5 986.5 H1364.5 M1352 986.5 V998" stroke="#333" stroke-width="1.6" fill="none" /><path d="M1394.5 981.5 H1412.5 V998 H1394.5 Z M1403.5 981.5 V998" stroke="#333" stroke-width="1.6" fill="none" /><path d="M1442.3 981.8 H1456.6 V992 H1442.3 Z M1458.8 981.8 H1461 V997.6 H1442.3 V994.5" stroke="#333" stroke-width="1.6" fill="none" /><path d="M1573.1 988 L1576.5 993 L1579.9 988" stroke="#333" stroke-width="2.3" fill="none" /><g transform="rotate(-12 1604 985)"><rect x="1584" y="965" width="40" height="40" rx="7" fill="#f25a1e"/></g><path d="M1617 975 Q1604 970 1594.5 976.5 Q1590 981 1598 984 L1608.5 986.5 Q1614 989 1609 993.5 Q1600 998.5 1590 993" stroke="#fff" stroke-width="4.2" fill="none" /><text x="1637" y="997" font-family="Liberation Sans" font-weight="bold" font-size="21" fill="#0a6fd8"></text><path d="M1639.5 982 H1657 V992 H1639.5 Z M1648.3 977.5 V998.5" stroke="#0a6fd8" stroke-width="3" fill="none" /><circle cx="1680" cy="981.5" r="2.2" stroke="#0a6fd8" stroke-width="1.6" fill="none"/><path d="M1690 985.5 Q1694 985 1693.5 989.5 L1690 995 Q1691 990 1688.5 989 Z" fill="#0a6fd8"/><circle cx="1690.5" cy="987.5" r="2.3" fill="#0a6fd8"/><rect x="1716" y="977" width="9" height="15" rx="4.5" fill="#0a6fd8"/><path d="M1712.5 988 Q1712.5 996 1720.5 996 Q1728.5 996 1728.5 988 M1720.5 996 V1000" stroke="#0a6fd8" stroke-width="2" fill="none" /><rect x="1746" y="980" width="22" height="17" rx="3" fill="#0a6fd8"/><rect x="1749.5" y="983.5" width="2.6" height="2.6" fill="#fff"/><rect x="1754" y="983.5" width="2.6" height="2.6" fill="#fff"/><rect x="1758.5" y="983.5" width="2.6" height="2.6" fill="#fff"/><rect x="1763" y="983.5" width="2.6" height="2.6" fill="#fff"/><rect x="1749.5" y="988" width="2.6" height="2.6" fill="#fff"/><rect x="1754" y="988" width="2.6" height="2.6" fill="#fff"/><rect x="1758.5" y="988" width="2.6" height="2.6" fill="#fff"/><rect x="1763" y="988" width="2.6" height="2.6" fill="#fff"/><rect x="1749.5" y="992.5" width="2.6" height="2.6" fill="#fff"/><rect x="1754" y="992.5" width="2.6" height="2.6" fill="#fff"/><rect x="1758.5" y="992.5" width="2.6" height="2.6" fill="#fff"/><rect x="1763" y="992.5" width="2.6" height="2.6" fill="#fff"/><path d="M1782 981 L1788 977.5 Q1792.5 980 1797 977.5 L1803.5 981 L1801.5 987 L1799 986 V998 H1786 V986 L1783.5 987 Z" fill="url(#shirt)"/><rect x="1816.5" y="982" width="24" height="16.5" rx="8.2" fill="#0a6fd8"/><rect x="1827.5" y="977" width="2" height="6" fill="#0a6fd8"/><path d="M1822 990.2 H1828 M1825 987.2 V993.2" stroke="#fff" stroke-width="1.7" fill="none" /><circle cx="1834" cy="990.2" r="2.3" fill="#fff"/><rect x="1855.5" y="980" width="9" height="8.5" rx="3" fill="#0a6fd8"/><rect x="1866" y="980" width="9" height="8.5" rx="1.5" fill="none" stroke="#0a6fd8" stroke-width="2.2"/><rect x="1855.5" y="990" width="9" height="8.5" rx="3" fill="#0a6fd8"/><rect x="1866" y="990" width="9" height="8.5" rx="3" fill="#0a6fd8"/><path d="M1901 977.5 L1911.5 995 H1890.5 Z M1901 1000.5 L1890.5 983 H1911.5 Z" fill="#0a6fd8"/><circle cx="1901" cy="989" r="5.5" fill="#fff"/><circle cx="1901" cy="988.5" r="2.8" fill="#0a6fd8"/><rect x="1900.2" y="989" width="1.6" height="8" fill="#fff"/><defs><linearGradient id="cld" x1="0" y1="0" x2="0" y2="1"><stop offset="0" stop-color="#b8dcf8"/><stop offset="1" stop-color="#5fa8e8"/></linearGradient><linearGradient id="winl" x1="0" y1="0" x2="1" y2="1"><stop offset="0" stop-color="#3ec8f8"/><stop offset="1" stop-color="#0a72d8"/></linearGradient><linearGradient id="vsc" x1="0" y1="0" x2="1" y2="0"><stop offset="0" stop-color="#0e68b8"/><stop offset="1" stop-color="#28a8f0"/></linearGradient></defs><path d="M33 1051 Q29 1051 29 1046 Q29 1041.5 34 1041 Q35 1034 42 1034 Q45.5 1029.5 51 1030 Q58.5 1031 59 1039 Q65 1040 65 1045.5 Q65 1051 60 1051 Z" fill="url(#cld)"/><rect x="576" y="1027.5" width="16.8" height="16.8" rx="1.5" fill="url(#winl)"/><rect x="594" y="1027.5" width="16.8" height="16.8" rx="1.5" fill="url(#winl)"/><rect x="576" y="1045.2" width="16.8" height="16.8" rx="1.5" fill="url(#winl)"/><rect x="594" y="1045.2" width="16.8" height="16.8" rx="1.5" fill="url(#winl)"/><circle cx="658.5" cy="1042.5" r="7.5" stroke="#222" stroke-width="2.2" fill="none"/><path d="M664 1048 L670.5 1054.5" stroke="#222" stroke-width="2.4" fill="none" /><rect x="988" y="1027" width="26.5" height="23.5" rx="2.5" fill="#f4f4f4" stroke="#d6d6d6" stroke-width=".6"/><rect x="979" y="1036" width="27" height="25" rx="2.5" fill="#222"/><rect x="988" y="1036" width="18" height="14.5" fill="#b8b8b8"/><path d="M1045 1030 Q1045 1028 1047 1028 H1056 L1059 1031 H1079 Q1081 1031 1081 1033 V1058 Q1081 1060 1079 1060 H1047 Q1045 1060 1045 1058 Z" fill="#f8c63a"/><path d="M1045 1030 Q1045 1028 1047 1028 H1056 L1059 1031 H1045 Z" fill="#e0a820"/><path d="M1051 1052 Q1051 1049.5 1053.5 1049.5 H1072.5 Q1075 1049.5 1075 1052 V1060 H1051 Z" fill="#1a78d0"/><rect x="1057" y="1053" width="12" height="1.6" fill="#0b4f98"/><rect x="1059.5" y="1068.8" width="8.5" height="3.5" rx="1.7" fill="#888"/><rect x="1191" y="1068.8" width="8.5" height="3.5" rx="1.7" fill="#888"/><rect x="1257.5" y="1068.8" width="8.5" height="3.5" rx="1.7" fill="#888"/><path d="M1121 1055.5 Q1120 1045 1121.5 1038 L1121 1031.5 L1126 1035 H1133 L1138 1031.5 L1137.5 1038 Q1139.5 1045 1139 1055.5 Z" fill="#1e3060"/><path d="M1121 1053 Q1115 1055 1116 1049" stroke="#1e3060" stroke-width="1.6" fill="none"/><circle cx="1126.5" cy="1041.5" r="1" fill="#fff"/><circle cx="1133" cy="1041.5" r="1" fill="#fff"/><circle cx="1195" cy="1044" r="18" fill="#1377d0"/><path d="M1177.5 1040 Q1181 1026 1195 1026 Q1211.5 1026 1213 1043 Q1213 1050 1204 1050 H1190 Q1191 1040 1199 1040 Q1196 1033 1188 1034 Q1180 1035 1177.5 1040 Z" fill="url(#edge1)"/><path d="M1190 1050 Q1192 1057 1201 1057 Q1208 1056.5 1212 1052 Q1208 1062 1195 1062 Q1185 1062 1181 1052 Q1179 1046 1183 1042 Q1187 1040 1190 1044 Z" fill="#0c5aa8"/><path d="M1268.5 1026.5 L1279 1031.5 V1056.5 L1268.5 1061.5 L1252 1046 L1246 1051 L1243 1049 V1039 L1246 1037 L1252 1042 Z M1268.5 1035.5 L1258 1044 L1268.5 1052.5 Z" fill="url(#vsc)" fill-rule="evenodd"/><path d="M1311.5 1035 H1325 M1311.5 1035 L1319.5 1054 L1328 1035 H1342 L1333 1054 L1329 1045" stroke="url(#wpsg)" stroke-width="4.2" fill="none" /><rect x="1315.5" y="1068" width="24" height="4" rx="2" fill="#1a6fd6"/><path d="M1493.5 1047.5 L1501 1040 L1508.5 1047.5" stroke="#222" stroke-width="1.7" fill="none" /><path d="M1546.5 1032.5 H1551.5 V1037.5 H1559.5 V1050 H1551.5 V1055 H1546.5 V1050 H1538.5 V1037.5 H1546.5 Z" fill="#fff" stroke="#333" stroke-width="1.2"/><rect x="1542" y="1041" width="4.5" height="5.5" fill="none" stroke="#333" stroke-width="1.1"/><rect x="1551.5" y="1041" width="4.5" height="5.5" fill="none" stroke="#333" stroke-width="1.1"/><g transform="rotate(-12 1606 1043.7)"><rect x="1595" y="1033" width="22" height="21.5" rx="3.5" fill="#f25a1e"/></g><path d="M1612.5 1038 Q1606 1035.5 1600.5 1038.5 Q1598 1041 1602.5 1043 L1607.5 1044.5 Q1611 1046 1608 1048.5 Q1603 1051 1598.5 1048.5" stroke="#fff" stroke-width="2.6" fill="none" /><path d="M1651.8 1040.5 Q1663.2 1030.5 1674.6 1040.5 M1655.8 1044.5 Q1663.2 1038 1670.6 1044.5 M1659.5 1048 Q1663.2 1045 1667 1048" stroke="#222" stroke-width="1.6" fill="none" /><circle cx="1663.2" cy="1050.5" r="1.6" fill="#222"/><path d="M1687.5 1040.5 H1692 L1698 1036 V1052 L1692 1047.5 H1687.5 Z M1701.5 1040 L1709 1047.5 M1709 1040 L1701.5 1047.5" stroke="#222" stroke-width="1.5" fill="none" /><path d="M1726 1040 H1724.5 Q1723 1040 1723 1041.5 V1048.5 Q1723 1050 1724.5 1050 H1742 Q1743.5 1050 1743.5 1048.5 V1041.5 Q1743.5 1040 1742 1040 H1733 M1745.5 1043 V1047" stroke="#222" stroke-width="1.5" fill="none" /><path d="M1731 1042 H1741.5 V1048 H1727 Z" fill="#222"/><path d="M1729.5 1033 L1726 1040 H1730 L1727.5 1046 L1733 1038.5 H1729.5 L1731.5 1033 Z" fill="#222"/></svg></body></html>
